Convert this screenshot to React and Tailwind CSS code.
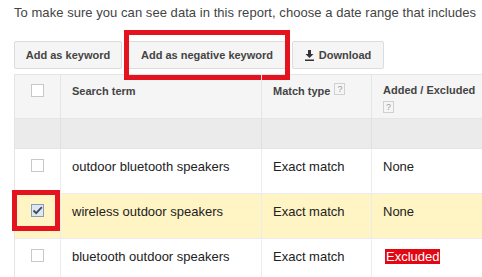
import React from 'react';

const Help = () => (
  <span className="inline-flex items-center justify-center w-[11px] h-[12px] border border-[#d0d0d0] text-[9px] leading-none text-[#999] font-normal align-middle">?</span>
);

const Box = ({ checked }) => (
  <span
    className={`flex items-center justify-center w-[13px] h-[13px] border ${
      checked ? 'border-[#8a9bb5] bg-[#dfe7f3]' : 'border-[#c8c8c8] bg-white'
    }`}
  >
    {checked && (
      <svg width="11" height="9" viewBox="0 0 11 9">
        <path d="M1.5 4.5 L4.2 7.2 L9.8 1.2" fill="none" stroke="#3c4a5c" strokeWidth="1.8" />
      </svg>
    )}
  </span>
);

const rows = [
  { term: 'outdoor bluetooth speakers', match: 'Exact match', status: 'None' },
  { term: 'wireless outdoor speakers', match: 'Exact match', status: 'None', selected: true },
  { term: 'bluetooth outdoor speakers', match: 'Exact match', status: 'Excluded' },
];

const grid = 'grid grid-cols-[46px_201px_110px_1fr]';

export default function App() {
  return (
    <div className="w-[482px] h-[277px] overflow-hidden bg-white font-['Liberation_Sans',Arial,sans-serif] text-[13px] text-[#222]">
      <p className="pl-[14px] pt-[5px] h-[30px] text-[#444] whitespace-nowrap leading-[16px] tracking-[0.05px]">
        To make sure you can see data in this report, choose a date range that includes
      </p>

      <div className="flex items-center pl-[14px] h-[50px]">
        <button className="h-[28px] w-[108px] bg-[#f5f5f5] border border-[#dcdcdc] rounded-[2px] text-[11px] font-bold text-[#444]">
          Add as keyword
        </button>
        <div className="ml-[2px] h-[50px] w-[166px] border-[5px] border-[#e3141f] flex items-center">
          <button className="h-[28px] w-full bg-[#f5f5f5] border-y border-[#dcdcdc] text-[11px] font-bold text-[#444]">
            Add as negative keyword
          </button>
        </div>
        <button className="ml-[2px] h-[28px] w-[92px] bg-[#f5f5f5] border border-[#dcdcdc] rounded-[2px] text-[11px] font-bold text-[#444] flex items-center justify-center gap-[5px]">
          <svg width="9" height="11" viewBox="0 0 9 11">
            <path d="M3 0 H6 V4 H8.5 L4.5 8 L0.5 4 H3 Z" fill="#333" />
            <rect x="0" y="9.5" width="9" height="1.5" fill="#333" />
          </svg>
          Download
        </button>
      </div>

      <div className="ml-[14px] mt-[-6px] w-[490px] border-l border-t border-[#e5e5e5]">
        <div className={`${grid} h-[44px] bg-[#f5f5f5] border-b border-[#e5e5e5] font-bold text-[11px] text-[#444]`}>
          <div className="flex justify-center pt-[9px] border-r border-[#e5e5e5]">
            <Box />
          </div>
          <div className="pl-[11px] pt-[8px] border-r border-[#e5e5e5]">Search term</div>
          <div className="pl-[11px] pt-[8px] border-r border-[#e5e5e5] flex items-start gap-[4px]">
            Match type <Help />
          </div>
          <div className="pl-[11px] pt-[8px] leading-[15px]">
            Added / Excluded
            <div className="mt-[1px]"><Help /></div>
          </div>
        </div>

        <div className={`${grid} h-[30px] bg-[#ebebeb] border-b border-[#e5e5e5]`}>
          <div className="border-r border-[#e0e0e0]" />
          <div className="border-r border-[#e0e0e0]" />
          <div className="border-r border-[#e0e0e0]" />
          <div />
        </div>

        {rows.map((r) => (
          <div
            key={r.term}
            className={`${grid} h-[45px] border-b border-[#ececec] ${r.selected ? 'bg-[#fff4c4]' : 'bg-white'}`}
          >
            <div className="relative flex justify-center pt-[10px] border-r border-[#ececec]">
              <Box checked={r.selected} />
              {r.selected && (
                <span className="absolute left-[-3px] top-[-4px] w-[48px] h-[41px] border-[5px] border-[#e3141f]" />
              )}
            </div>
            <div className="pl-[11px] pt-[8px] border-r border-[#ececec]">{r.term}</div>
            <div className="pl-[11px] pt-[8px] border-r border-[#ececec]">{r.match}</div>
            <div className="pl-[11px] pt-[8px]">
              {r.status === 'Excluded' ? (
                <span className="inline-block ml-[2px] bg-[#e30613] text-white px-[1px] leading-[15px]">Excluded</span>
              ) : (
                r.status
              )}
            </div>
          </div>
        ))}
      </div>
    </div>
  );
}
